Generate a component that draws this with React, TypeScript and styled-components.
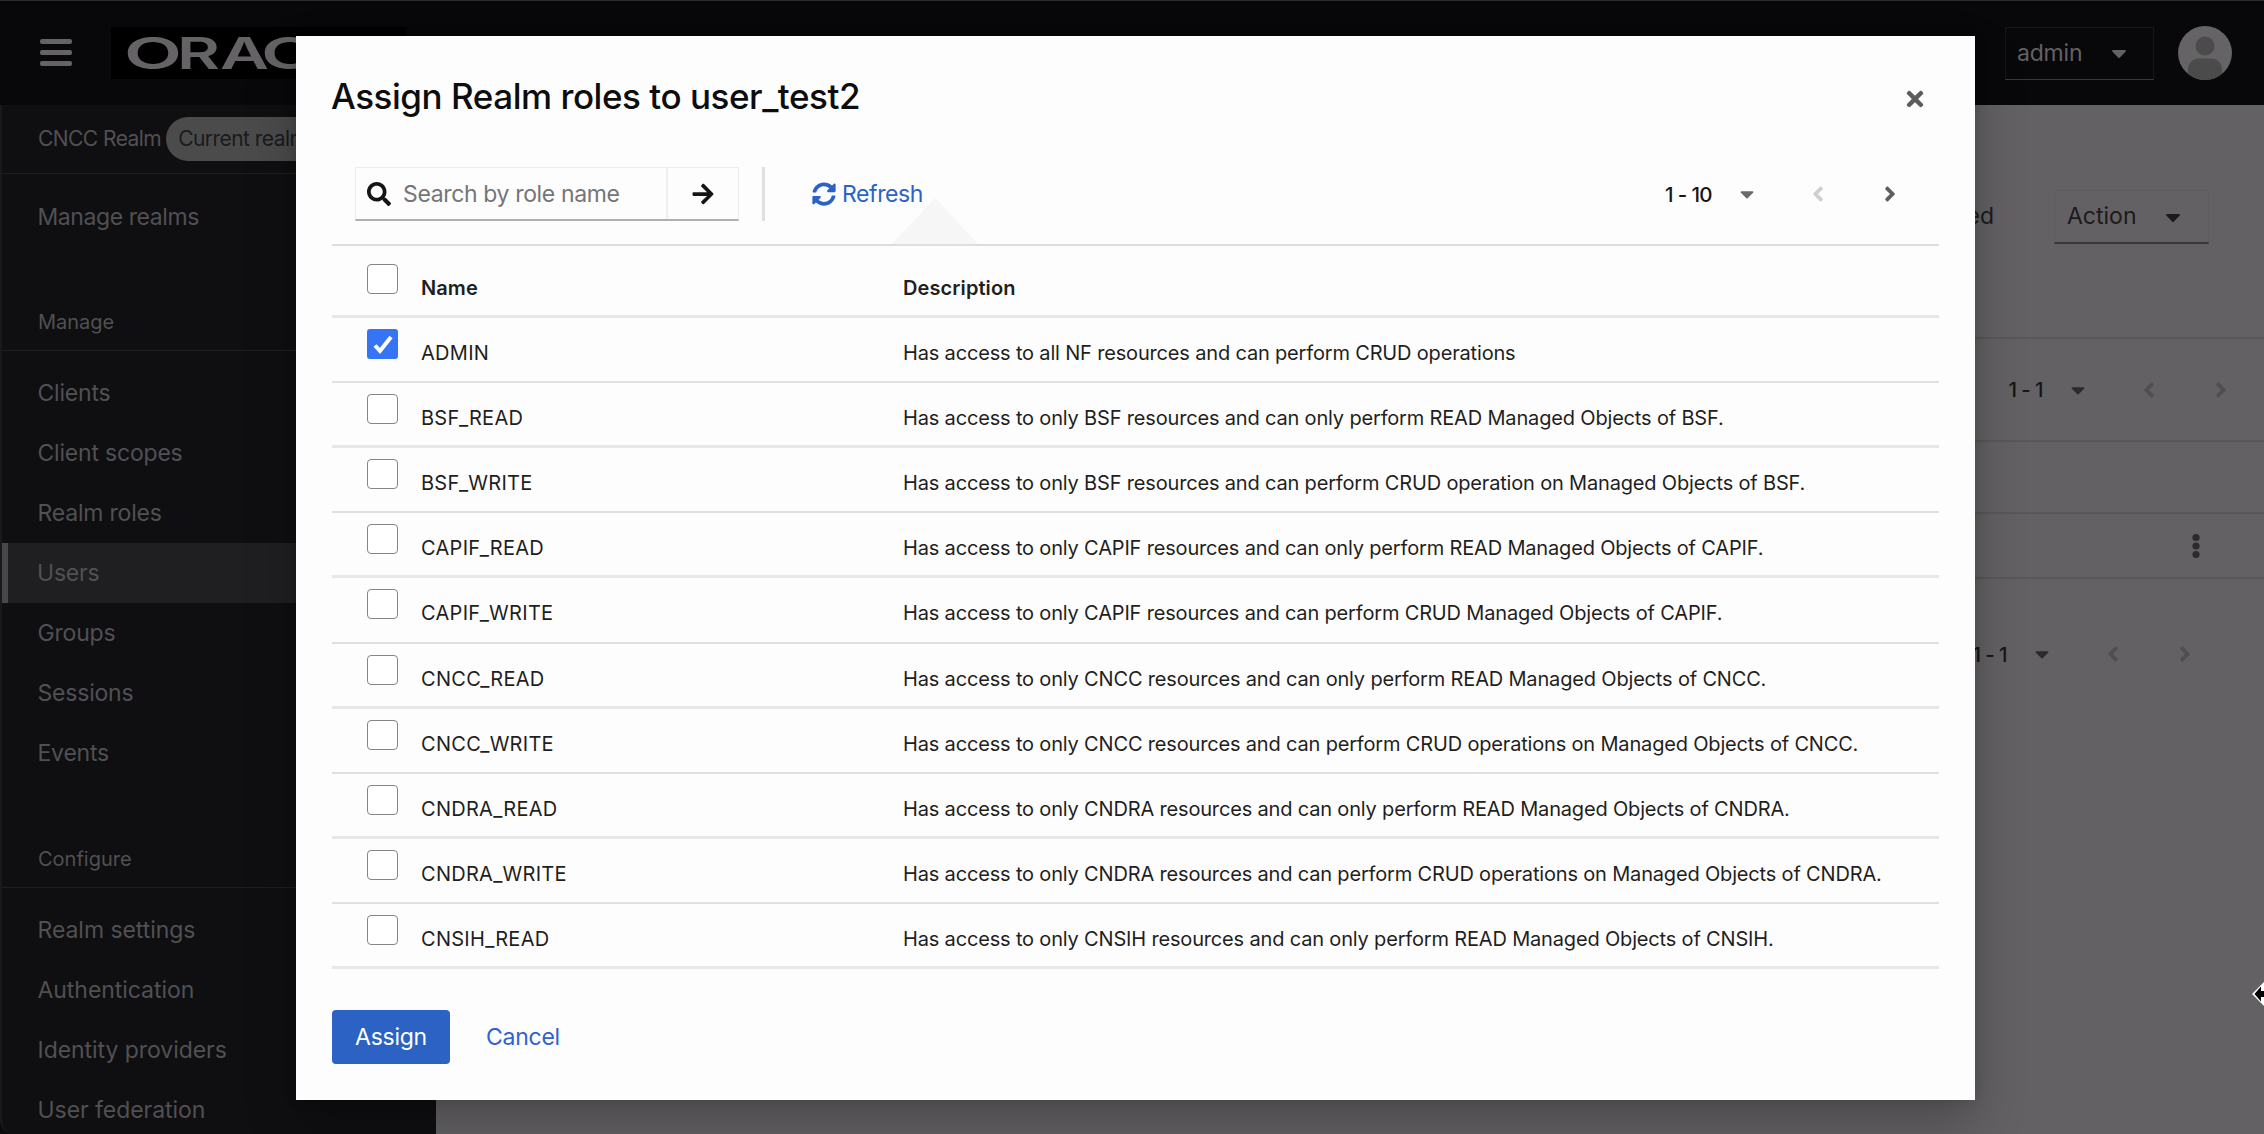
import React from "react";
import styled, { createGlobalStyle, css } from "styled-components";
import {
  FaAngleLeft,
  FaAngleRight,
  FaArrowRight,
  FaCaretDown,
  FaSearch,
  FaSyncAlt,
  FaTimes,
} from "react-icons/fa";

const GlobalStyle = createGlobalStyle`
  * { box-sizing: border-box; }
  body {
    margin: 0;
    overflow: hidden;
    background: #0b0b0d;
    font-family: Inter, "Noto Sans", sans-serif;
    font-size: 23px;
  }
  svg { display: block; flex: none; }
`;

const Shell = styled.div`
  position: relative;
  display: flex;
  flex-direction: column;
  width: 2264px;
  height: 1134px;
  overflow: hidden;
  border-top: 1px solid #2b2b2d;
`;

/* Masthead */

const Masthead = styled.header`
  display: flex;
  align-items: center;
  flex: none;
  height: 104px;
  padding: 0 32px 0 40px;
  background: #08080a;
`;

const MenuButton = styled.div`
  display: flex;
  flex-direction: column;
  gap: 6px;
  width: 32px;
  margin: 0 39px 2px 0;
`;

const MenuBar = styled.span`
  height: 5px;
  border-radius: 2px;
  background: #656366;
`;

const Brand = styled.div`
  width: 295px;
  height: 52px;
  margin-right: auto;
  background: #000;
`;

const Wordmark = styled.svg`
  fill: #656366;
  font-family: Inter, sans-serif;
  font-size: 43.5px;
  font-weight: 600;
`;

const AccountToggle = styled.div`
  display: flex;
  align-items: center;
  justify-content: space-between;
  width: 149px;
  height: 53px;
  margin-right: 24px;
  padding: 0 27px 0 11px;
  border: 1px solid #161618;
  border-bottom-color: #39393b;
  color: #636164;
  letter-spacing: -0.2px;

  svg {
    margin-right: -5px;
  }
`;

/* Sidebar */

const Body = styled.div`
  display: flex;
  flex: 1;
  min-height: 0;
`;

const Sidebar = styled.nav`
  flex: none;
  width: 436px;
  background: #0f0e11;
  border-left: 2px solid #19191b;
  border-bottom-left-radius: 14px;
  color: #515053;
`;

const RealmRow = styled.div`
  display: flex;
  align-items: center;
  gap: 5px;
  height: 69px;
  padding: 0 0 1px 36px;
  border-bottom: 1px solid #1e1e21;
  font-size: 21px;
  white-space: nowrap;
  letter-spacing: -0.55px;
`;

const RealmBadge = styled.span`
  height: 44px;
  padding: 0 12px;
  border-radius: 22px;
  background: #4b4b4c;
  color: #1b1a1d;
  line-height: 44px;
`;

const NavLink = styled.div<{ $current?: boolean; $top?: number; $tracking?: number }>`
  height: 60px;
  margin-top: ${(p) => p.$top ?? 0}px;
  padding-left: ${(p) => (p.$current ? 29 : 35.5)}px;
  line-height: 60px;
  letter-spacing: ${(p) => p.$tracking ?? -0.15}px;
  ${(p) =>
    p.$current &&
    css`
      border-left: 6px solid #48484a;
      background: #1f1e21;
    `}
`;

const NavHeading = styled.div<{ $top: number }>`
  height: 51px;
  margin-top: ${(p) => p.$top}px;
  margin-bottom: 12px;
  padding-left: 36px;
  border-bottom: 1px solid #1e1e21;
  font-size: 20px;
  line-height: 45px;
`;

/* Page behind the dialog */

const Page = styled.main`
  flex: 1;
  min-width: 0;
  background: #636164;
  color: #1b1a1d;
`;

const UserHeader = styled.div`
  display: flex;
  justify-content: flex-end;
  gap: 60px;
  height: 234px;
  padding: 85px 55px 0 0;
  border-bottom: 2px solid #58585a;
  line-height: 53px;
`;

const ActionToggle = styled.div`
  display: flex;
  align-items: center;
  justify-content: space-between;
  width: 155px;
  height: 54px;
  padding: 0 28px 0 12px;
  border: 1px solid #5d5c5f;
  border-bottom: 2px solid #38383a;

  svg {
    margin-right: -5px;
  }
`;

const PageRow = styled.div<{ $height: number; $right: number; $plain?: boolean }>`
  display: flex;
  align-items: center;
  justify-content: flex-end;
  height: ${(p) => p.$height}px;
  padding-right: ${(p) => p.$right}px;
  border-bottom: ${(p) => (p.$plain ? "none" : "2px solid #58585a")};
`;

/* Pagination */

const Pager = styled.div<{ $muted?: boolean }>`
  display: flex;
  align-items: center;
  color: ${(p) => (p.$muted ? "#161518" : "#151515")};
  font-size: 20.5px;
  font-weight: 500;
  letter-spacing: -0.6px;
  white-space: nowrap;
`;

const PagerIcon = styled.span<{ $width: number; $gap: number; $color: string }>`
  display: flex;
  justify-content: center;
  width: ${(p) => p.$width}px;
  margin-left: ${(p) => p.$gap}px;
  color: ${(p) => p.$color};
`;

function Pagination({ range, muted }: { range: string; muted?: boolean }) {
  const off = muted ? "#4f4e51" : "#cfcfd0";
  return (
    <Pager $muted={muted}>
      {range}
      <PagerIcon $width={12} $gap={29} $color={muted ? "#2b2a2d" : "#6a6a6c"}>
        <FaCaretDown size={22} />
      </PagerIcon>
      <PagerIcon $width={10} $gap={60} $color={off}>
        <FaAngleLeft size={24} />
      </PagerIcon>
      <PagerIcon $width={10} $gap={62} $color={muted ? off : "#5e5e60"}>
        <FaAngleRight size={24} />
      </PagerIcon>
    </Pager>
  );
}

/* Dialog */

const Overlay = styled.div`
  position: absolute;
  inset: -1px 0 0 0;
  display: flex;
  justify-content: center;
  padding: 36px 289px 34px 296px;
`;

const Dialog = styled.section`
  display: flex;
  flex-direction: column;
  width: 1679px;
  height: 1064px;
  padding: 0 36px;
  background: #fefdfe;
  box-shadow: 0 24px 48px rgba(3, 3, 3, 0.24), 0 0 12px rgba(3, 3, 3, 0.14);
`;

const DialogHeader = styled.div`
  display: flex;
  align-items: center;
  justify-content: space-between;
  height: 125px;
  padding-right: 12px;
  color: #5c5c5e;
`;

const Title = styled.h1`
  margin: 0 0 0 -1px;
  padding-bottom: 6px;
  color: #0d0d0e;
  font-size: 35px;
  font-weight: 500;
  letter-spacing: -0.46px;
`;

const Toolbar = styled.div`
  position: relative;
  display: flex;
  align-items: center;
  height: 85px;
  padding: 0 44px 17px 23px;
  border-bottom: 2px solid #dcdddd;
`;

const SearchField = styled.div`
  display: flex;
  width: 384px;
  height: 54px;
  border: 1px solid #ececec;
  border-bottom: 2px solid #aeb0b0;
`;

const SearchInput = styled.div`
  display: flex;
  align-items: center;
  gap: 12px;
  width: 312px;
  padding-left: 11px;
  border-right: 2px solid #efefef;
  color: #151515;
`;

const Placeholder = styled.span`
  color: #747577;
  letter-spacing: -0.36px;
`;

const SearchSubmit = styled.div`
  display: flex;
  flex: 1;
  align-items: center;
  justify-content: center;
  color: #151515;
`;

const Divider = styled.span`
  width: 3px;
  height: 54px;
  margin: 0 47px 0 23px;
  background: #e0e0e0;
`;

const RefreshLink = styled.div`
  display: flex;
  align-items: center;
  gap: 6px;
  margin-right: auto;
  color: #2b62c9;
  letter-spacing: -0.4px;
`;

const Beak = styled.span`
  position: absolute;
  left: 560px;
  bottom: 0;
  width: 86px;
  height: 46px;
  background: #f5f6f5;
  clip-path: polygon(50% 0, 100% 100%, 0 100%);
`;

const Table = styled.div`
  color: #1f1f21;
  font-size: 20px;
`;

const Row = styled.div<{ $head?: boolean }>`
  display: grid;
  grid-template-columns: 89px 482px 1fr;
  height: ${(p) => (p.$head ? 71.6 : 65.2)}px;
  padding-top: ${(p) => (p.$head ? 18 : 11)}px;
  border-bottom: 2px solid #dfe0e0;
  font-weight: ${(p) => (p.$head ? 600 : 400)};
  letter-spacing: ${(p) => (p.$head ? 0.1 : -0.17)}px;
  white-space: nowrap;
  &:nth-child(odd) {
    border-bottom: 3px solid #e6e7e6;
  }
`;

const Cell = styled.div`
  padding-top: 12px;
  line-height: 24px;
`;

const NameCell = styled(Cell)`
  letter-spacing: 0.28px;
`;

const CheckCell = styled.div`
  padding-left: 35px;
`;

const Checkbox = styled.span<{ $on?: boolean }>`
  display: flex;
  align-items: center;
  justify-content: center;
  width: 31px;
  height: 30px;
  border: ${(p) => (p.$on ? "none" : "1.5px solid #858587")};
  border-radius: ${(p) => (p.$on ? 3 : 4)}px;
  background: ${(p) => (p.$on ? "#3574f6" : "#fff")};
`;

const Footer = styled.div`
  display: flex;
  align-items: center;
  gap: 36px;
  margin-top: 41px;
`;

const PrimaryButton = styled.div`
  width: 118px;
  height: 54px;
  border-radius: 4px;
  background: #2b62c4;
  color: #fff;
  line-height: 54px;
  text-align: center;
  letter-spacing: -0.25px;
`;

const LinkButton = styled.div`
  color: #2f62cf;
  letter-spacing: -0.25px;
`;

const Pointer = styled.span`
  position: absolute;
  right: 0;
  top: 979px;
`;

const roles: [string, string][] = [
  ["ADMIN", "Has access to all NF resources and can perform CRUD operations"],
  ["BSF_READ", "Has access to only BSF resources and can only perform READ Managed Objects of BSF."],
  ["BSF_WRITE", "Has access to only BSF resources and can perform CRUD operation on Managed Objects of BSF."],
  ["CAPIF_READ", "Has access to only CAPIF resources and can only perform READ Managed Objects of CAPIF."],
  ["CAPIF_WRITE", "Has access to only CAPIF resources and can perform CRUD Managed Objects of CAPIF."],
  ["CNCC_READ", "Has access to only CNCC resources and can only perform READ Managed Objects of CNCC."],
  ["CNCC_WRITE", "Has access to only CNCC resources and can perform CRUD operations on Managed Objects of CNCC."],
  ["CNDRA_READ", "Has access to only CNDRA resources and can only perform READ Managed Objects of CNDRA."],
  ["CNDRA_WRITE", "Has access to only CNDRA resources and can perform CRUD operations on Managed Objects of CNDRA."],
  ["CNSIH_READ", "Has access to only CNSIH resources and can only perform READ Managed Objects of CNSIH."],
];

const manage = ["Clients", "Client scopes", "Realm roles", "Users", "Groups", "Sessions", "Events"];
const configure = ["Realm settings", "Authentication", "Identity providers", "User federation"];

/* Letter, left edge and drawn width of each glyph in the brand wordmark */
const wordmark: [string, number, number][] = [
  ["O", 13, 58],
  ["R", 66, 43],
  ["A", 109, 49],
  ["C", 150, 55],
  ["L", 201, 34],
  ["E", 233, 40],
];

export default function App() {
  return (
    <>
      <GlobalStyle />
      <Shell>
        <Masthead>
          <MenuButton>
            <MenuBar />
            <MenuBar />
            <MenuBar />
          </MenuButton>
          <Brand>
            <Wordmark width="295" height="52">
              {wordmark.map(([letter, x, width]) => (
                <text key={letter} x={x} y="41.5" textLength={width} lengthAdjust="spacingAndGlyphs">
                  {letter}
                </text>
              ))}
            </Wordmark>
          </Brand>
          <AccountToggle>
            admin
            <FaCaretDown size={24} />
          </AccountToggle>
          <svg width="54" height="54" viewBox="0 0 54 54">
            <clipPath id="avatar">
              <circle cx="27" cy="27" r="27" />
            </clipPath>
            <g clipPath="url(#avatar)">
              <rect width="54" height="54" fill="#656366" />
              <circle cx="27" cy="20" r="9.5" fill="#4b4b4c" />
              <rect x="10" y="32.5" width="34" height="34" rx="11" fill="#4b4b4c" />
            </g>
          </svg>
        </Masthead>
        <Body>
          <Sidebar>
            <RealmRow>
              CNCC Realm
              <RealmBadge>Current realm</RealmBadge>
            </RealmRow>
            <NavLink $top={13} $tracking={-0.42}>
              Manage realms
            </NavLink>
            <NavHeading $top={53}>Manage</NavHeading>
            {manage.map((label) => (
              <NavLink key={label} $current={label === "Users"} $tracking={-0.2}>
                {label}
              </NavLink>
            ))}
            <NavHeading $top={54}>Configure</NavHeading>
            {configure.map((label) => (
              <NavLink key={label} $tracking={-0.05}>
                {label}
              </NavLink>
            ))}
          </Sidebar>
          <Page>
            <UserHeader>
              <span>Enabled</span>
              <ActionToggle>
                Action
                <FaCaretDown size={24} />
              </ActionToggle>
            </UserHeader>
            <PageRow $height={103} $right={38}>
              <Pagination range="1 - 1" muted />
            </PageRow>
            <PageRow $height={72} $right={0} />
            <PageRow $height={65} $right={64}>
              <svg width="8" height="26" viewBox="0 0 8 26" fill="#2b2a2d">
                <circle cx="4" cy="4.5" r="3.6" />
                <circle cx="4" cy="13" r="3.6" />
                <circle cx="4" cy="21.5" r="3.6" />
              </svg>
            </PageRow>
            <PageRow $height={150} $right={74} $plain>
              <Pagination range="1 - 1" muted />
            </PageRow>
          </Page>
        </Body>
        <Overlay>
          <Dialog>
            <DialogHeader>
              <Title>Assign Realm roles to user_test2</Title>
              <FaTimes size={24} />
            </DialogHeader>
            <Toolbar>
              <Beak />
              <SearchField>
                <SearchInput>
                  <FaSearch size={24} />
                  <Placeholder>Search by role name</Placeholder>
                </SearchInput>
                <SearchSubmit>
                  <FaArrowRight size={24} />
                </SearchSubmit>
              </SearchField>
              <Divider />
              <RefreshLink>
                <FaSyncAlt size={24} />
                Refresh
              </RefreshLink>
              <Pagination range="1 - 10" />
            </Toolbar>
            <Table>
              <Row $head>
                <CheckCell>
                  <Checkbox />
                </CheckCell>
                <Cell>Name</Cell>
                <Cell>Description</Cell>
              </Row>
              {roles.map(([name, description]) => (
                <Row key={name}>
                  <CheckCell>
                    <Checkbox $on={name === "ADMIN"}>
                      {name === "ADMIN" && (
                        <svg width="24" height="24" viewBox="0 0 24 24" fill="none" stroke="#fff" strokeWidth="4">
                          <path d="M4 13.5 L9 19 L20 5" />
                        </svg>
                      )}
                    </Checkbox>
                  </CheckCell>
                  <NameCell>{name}</NameCell>
                  <Cell>{description}</Cell>
                </Row>
              ))}
            </Table>
            <Footer>
              <PrimaryButton>Assign</PrimaryButton>
              <LinkButton>Cancel</LinkButton>
            </Footer>
          </Dialog>
        </Overlay>
        <Pointer>
          <svg width="14" height="28" viewBox="0 0 14 28">
            <path d="M14 2 L2 14 L14 26 Z" fill="#fff" />
            <path d="M11 6.5 V11 H14 V17 H11 V21.5 L4.5 14 Z" fill="#000" />
          </svg>
        </Pointer>
      </Shell>
    </>
  );
}
